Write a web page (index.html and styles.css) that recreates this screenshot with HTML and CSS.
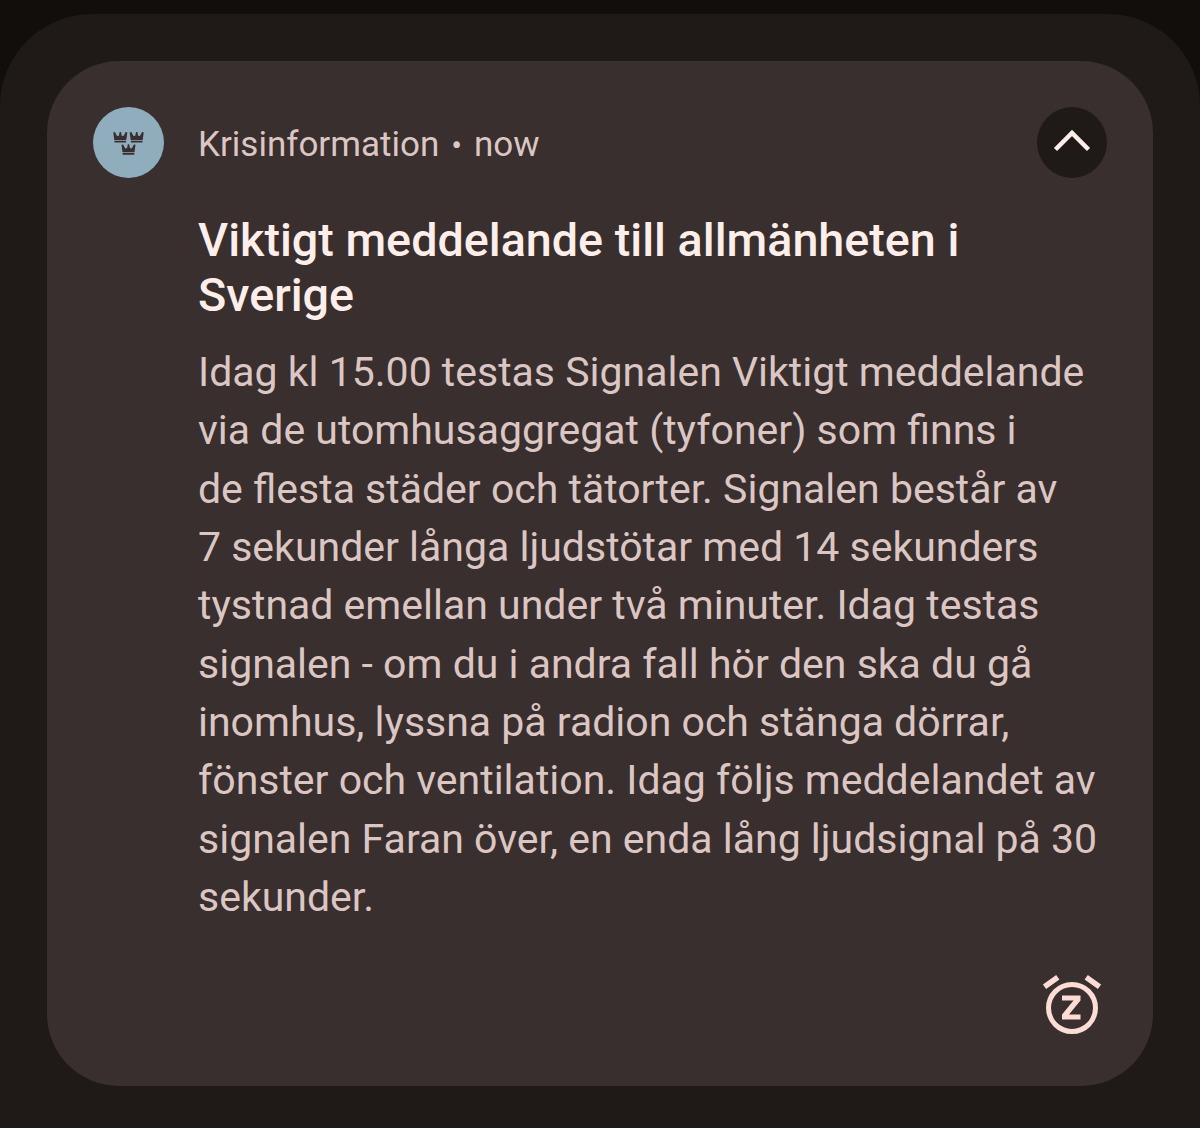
FILE: index.html
```html
<!DOCTYPE html>
<html lang="sv">
<head>
    <meta charset="UTF-8">
    <meta name="viewport" content="width=device-width, initial-scale=1.0">
    <title>Krisinformation</title>
    <link rel="stylesheet" href="styles.css">
</head>
<body>
    <div class="shade">
        <div class="card">
            <div class="avatar">
                <svg class="crowns" viewBox="0 0 31 24" width="31" height="24">
                    <defs>
                        <path id="crown" d="M0 1 L1.600 0.600 L3.800 4.600 L5.600 4.200 L6.300 0.400 H7.700 L8.400 4.200 L10.200 4.600 L12.400 0.600 L14 1 L13 8.500 H1 Z M1.200 9.300 H12.800 V11 H1.200 Z"/>
                    </defs>
                    <use href="#crown" x="0.300" y="0.500"/>
                    <use href="#crown" x="16.700" y="0.500"/>
                    <use href="#crown" x="8.500" y="12.800"/>
                </svg>
            </div>
            <div class="content">
                <div class="head">
                    <span>Krisinformation</span>
                    <span class="dot">•</span>
                    <span>now</span>
                </div>
                <h1>Viktigt meddelande till allmänheten i<br>Sverige</h1>
                <p class="message">Idag kl 15.00 testas Signalen Viktigt meddelande<br>via de utomhusaggregat (tyfoner) som finns i<br>de flesta städer och tätorter. Signalen består av<br>7 sekunder långa ljudstötar med 14 sekunders<br>tystnad emellan under två minuter. Idag testas<br>signalen - om du i andra fall hör den ska du gå<br>inomhus, lyssna på radion och stänga dörrar,<br>fönster och ventilation. Idag följs meddelandet av<br>signalen Faran över, en enda lång ljudsignal på 30<br>sekunder.</p>
            </div>
            <div class="side">
                <button class="collapse">
                    <svg viewBox="0 0 40 26" width="40" height="26" fill="none" stroke="#fdeeea" stroke-width="4.5">
                        <path d="M3.500 22.500 L20 6 L36.500 22.500"/>
                    </svg>
                </button>
                <svg class="snooze" viewBox="0 0 60 60" width="60" height="60">
                    <g fill="none" stroke="#fcdcd4">
                        <circle cx="30" cy="33" r="23.500" stroke-width="5"/>
                        <path d="M2.500 11.700 L15.800 2.300 M57.500 11.700 L44.200 2.300" stroke-width="5.500"/>
                    </g>
                    <path fill="#fcdcd4" d="M20 20.500 H38.500 V25.500 L27 39.500 H38.500 V44.500 H20 V39.500 L31.500 25.500 H20 Z"/>
                </svg>
            </div>
        </div>
    </div>
</body>
</html>
```

FILE: styles.css
```css
* {
    margin: 0;
    padding: 0;
    box-sizing: border-box;
}

body {
    background-color: #110e0c;
    font-family: Roboto, sans-serif;
    height: 1128px;
    overflow: hidden;
    padding-top: 14px;
}

.shade {
    background-color: #1f1a18;
    height: 1114px;
    border-radius: 92px 92px 0 0;
    padding: 47px 47px 0;
}

.card {
    background-color: #382f2e;
    height: 1025px;
    border-radius: 72px;
    padding: 46px 46px 0;
    display: flex;
}

.avatar {
    width: 71px;
    height: 71px;
    flex-shrink: 0;
    border-radius: 50%;
    background-color: #8fadbc;
    display: flex;
    align-items: center;
    justify-content: center;
}

.crowns {
    fill: #382f2e;
}

.content {
    flex: 1;
    min-width: 0;
    margin-left: 34px;
}

.head {
    display: flex;
    align-items: center;
    gap: 12px;
    height: 75px;
    font-size: 35px;
    color: #dcc6c3;
}

.dot {
    font-size: 32px;
}

h1 {
    font-size: 46.7px;
    font-weight: 500;
    line-height: 55px;
    color: #fdeeea;
    margin-top: 31px;
}

.message {
    font-size: 41px;
    line-height: 58.35px;
    color: #dcc6c3;
    margin-top: 20px;
    white-space: nowrap;
}

.side {
    width: 70px;
    flex-shrink: 0;
    display: flex;
    flex-direction: column;
    align-items: center;
}

.collapse {
    width: 70px;
    height: 71px;
    border: none;
    border-radius: 50%;
    background-color: #1f1a18;
    display: flex;
    align-items: center;
    justify-content: center;
    padding-bottom: 6px;
}

.snooze {
    margin-top: 797px;
}
```
